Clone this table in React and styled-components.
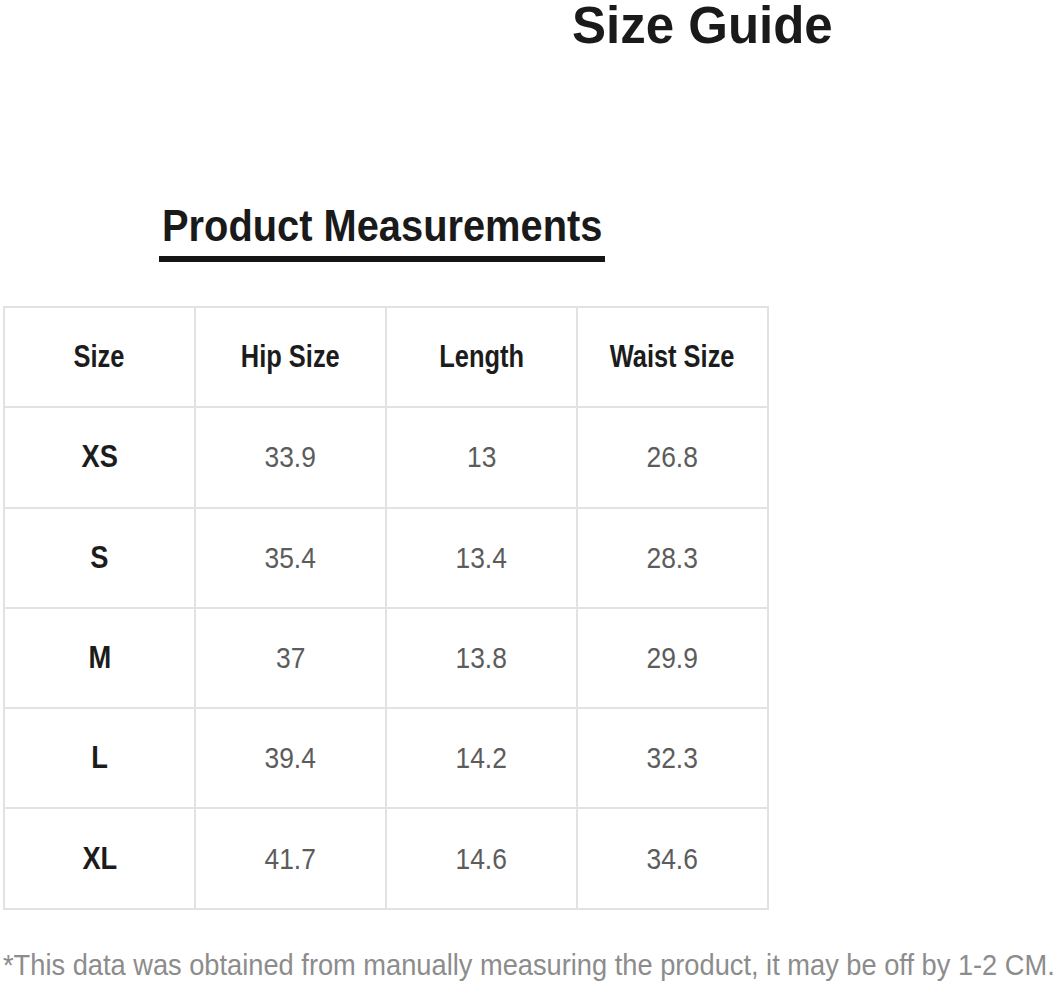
import { createGlobalStyle, styled } from "styled-components";

const GlobalStyle = createGlobalStyle`
  body {
    margin: 0;
    background: #fff;
    font-family: "Liberation Sans", Arial, sans-serif;
  }
`;

const Page = styled.div`
  width: 1061px;
  height: 983px;
  display: flex;
  flex-direction: column;
  overflow: hidden;
`;

// condensed look (no Arial Narrow here), squeezed sideways
const Squeeze = styled.span`
  display: inline-block;
  white-space: nowrap;
  transform: scaleX(${(p) => p.$sx});
  transform-origin: ${(p) => p.$origin || "center"};
`;

const Title = styled.h1`
  margin: 0;
  padding: 0 0 0 572px;
  height: 60px;
  line-height: 51px;
  font-size: 51px;
  font-weight: 700;
  color: #1a1a1a;
`;

const SubTitleRow = styled.div`
  margin-top: 141px;
  padding-left: 159px;
`;

const SubTitle = styled.h2`
  width: 446px;
  margin: 0;
  padding: 0 0 5px 3px;
  box-sizing: border-box;
  font-size: 45px;
  font-weight: 700;
  line-height: 50px;
  color: #1a1a1a;
  border-bottom: 6px solid #151515;
  white-space: nowrap;
`;

const Table = styled.div`
  margin: 44px 0 0 3px;
  width: 764px;
  display: grid;
  grid-template-columns: repeat(4, 1fr);
  border-top: 2px solid #e2e2e2;
  border-left: 2px solid #e2e2e2;
`;

const Cell = styled.div`
  height: 98.3px;
  display: flex;
  align-items: center;
  justify-content: center;
  border-right: 2px solid #e2e2e2;
  border-bottom: 2px solid #e2e2e2;
  font-size: ${(p) => (p.$head ? "31px" : "30px")};
  font-weight: ${(p) => (p.$head ? 700 : 400)};
  color: ${(p) => (p.$head ? "#1c1c1c" : "#5c5c5c")};
`;

const Note = styled.p`
  margin: 38px 0 0 3px;
  font-size: 30px;
  color: #8c8c8c;
`;

const headers = ["Size", "Hip Size", "Length", "Waist Size"];
const rows = [
  ["XS", "33.9", "13", "26.8"],
  ["S", "35.4", "13.4", "28.3"],
  ["M", "37", "13.8", "29.9"],
  ["L", "39.4", "14.2", "32.3"],
  ["XL", "41.7", "14.6", "34.6"],
];

const App = () => {
  return (
    <Page>
      <GlobalStyle />
      <Title>Size Guide</Title>
      <SubTitleRow>
        <SubTitle>
          <Squeeze $sx={0.885} $origin="left">Product Measurements</Squeeze>
        </SubTitle>
      </SubTitleRow>
      <Table>
        {headers.map((h) => (
          <Cell key={h} $head>
            <Squeeze $sx={0.82}>{h}</Squeeze>
          </Cell>
        ))}
        {rows.map((r) =>
          r.map((v, i) => (
            <Cell key={r[0] + i} $head={i === 0}>
              <Squeeze $sx={0.88}>{v}</Squeeze>
            </Cell>
          ))
        )}
      </Table>
      <Note>
        <Squeeze $sx={0.908} $origin="left">
          *This data was obtained from manually measuring the product, it may be off by 1-2 CM.
        </Squeeze>
      </Note>
    </Page>
  );
};

export default App;
